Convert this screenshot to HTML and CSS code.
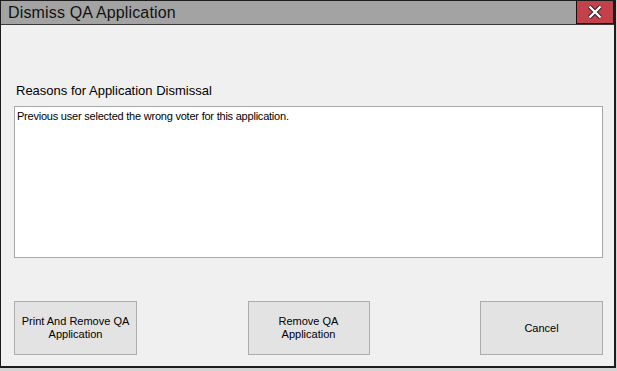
FILE: index.html
```html
<!DOCTYPE html>
<html lang="en">
<head>
    <meta charset="UTF-8">
    <title>Dismiss QA Application</title>
    <link rel="stylesheet" href="styles.css">
</head>
<body>
    <div class="window">
        <div class="titlebar">
            <div class="title">Dismiss QA Application</div>
            <div class="close">
                <svg width="18" height="16" viewBox="0 0 18 16">
                    <path d="M3.5 2.5 L14.5 13.5 M14.5 2.5 L3.5 13.5" stroke="#222" stroke-width="4.2" fill="none"/>
                    <path d="M3.5 2.5 L14.5 13.5 M14.5 2.5 L3.5 13.5" stroke="#fff" stroke-width="2.4" fill="none"/>
                </svg>
            </div>
        </div>
        <div class="content">
            <div class="field-label">Reasons for Application Dismissal</div>
            <div class="reason-box">Previous user selected the wrong voter for this application.</div>
            <div class="buttons">
                <button class="btn">Print And Remove QA<br>Application</button>
                <button class="btn">Remove QA<br>Application</button>
                <button class="btn">Cancel</button>
            </div>
        </div>
    </div>
</body>
</html>
```

FILE: styles.css
```css
/* Page */
body {
    margin: 0;
    background: #d4d4d4;
    font-family: 'Liberation Sans', Arial, sans-serif;
    color: #000;
}

/* Window frame */
.window {
    width: 613px;
    height: 365px;
    border: 1px solid #1c1c1c;
    border-right-width: 2px;
    border-bottom-width: 2px;
    background: #f0f0f0;
    display: flex;
    flex-direction: column;
}

.titlebar {
    height: 23px;
    background: #a3a3a3;
    border-bottom: 1px solid #3a3a3a;
    display: flex;
    justify-content: space-between;
}

.title {
    font-size: 16px;
    letter-spacing: 0.15px;
    padding: 3px 0 0 7px;
    color: #111;
}

.close {
    width: 36px;
    height: 22px;
    background: #c4414b;
    border: 1px solid #111;
    border-top: none;
    display: flex;
    align-items: center;
    justify-content: center;
}

/* Body */
.content {
    flex: 1;
    padding: 58px 11px 11px 13px;
    display: flex;
    flex-direction: column;
}

.field-label {
    font-size: 13px;
    line-height: 15px;
    padding-left: 2px;
    margin-bottom: 8px;
}

.reason-box {
    height: 144px;
    background: #fff;
    border: 1px solid #a8a8a8;
    font-size: 11px;
    letter-spacing: -0.22px;
    padding: 3px 2px;
}

.buttons {
    margin-top: auto;
    display: flex;
    justify-content: space-between;
}

.btn {
    width: 123px;
    height: 54px;
    background: #e3e3e3;
    border: 1px solid #adadad;
    font-family: 'Liberation Sans', Arial, sans-serif;
    font-size: 11px;
    line-height: 13px;
    color: #000;
    padding: 0;
}

.btn:nth-child(2) {
    width: 122px;
}
```
